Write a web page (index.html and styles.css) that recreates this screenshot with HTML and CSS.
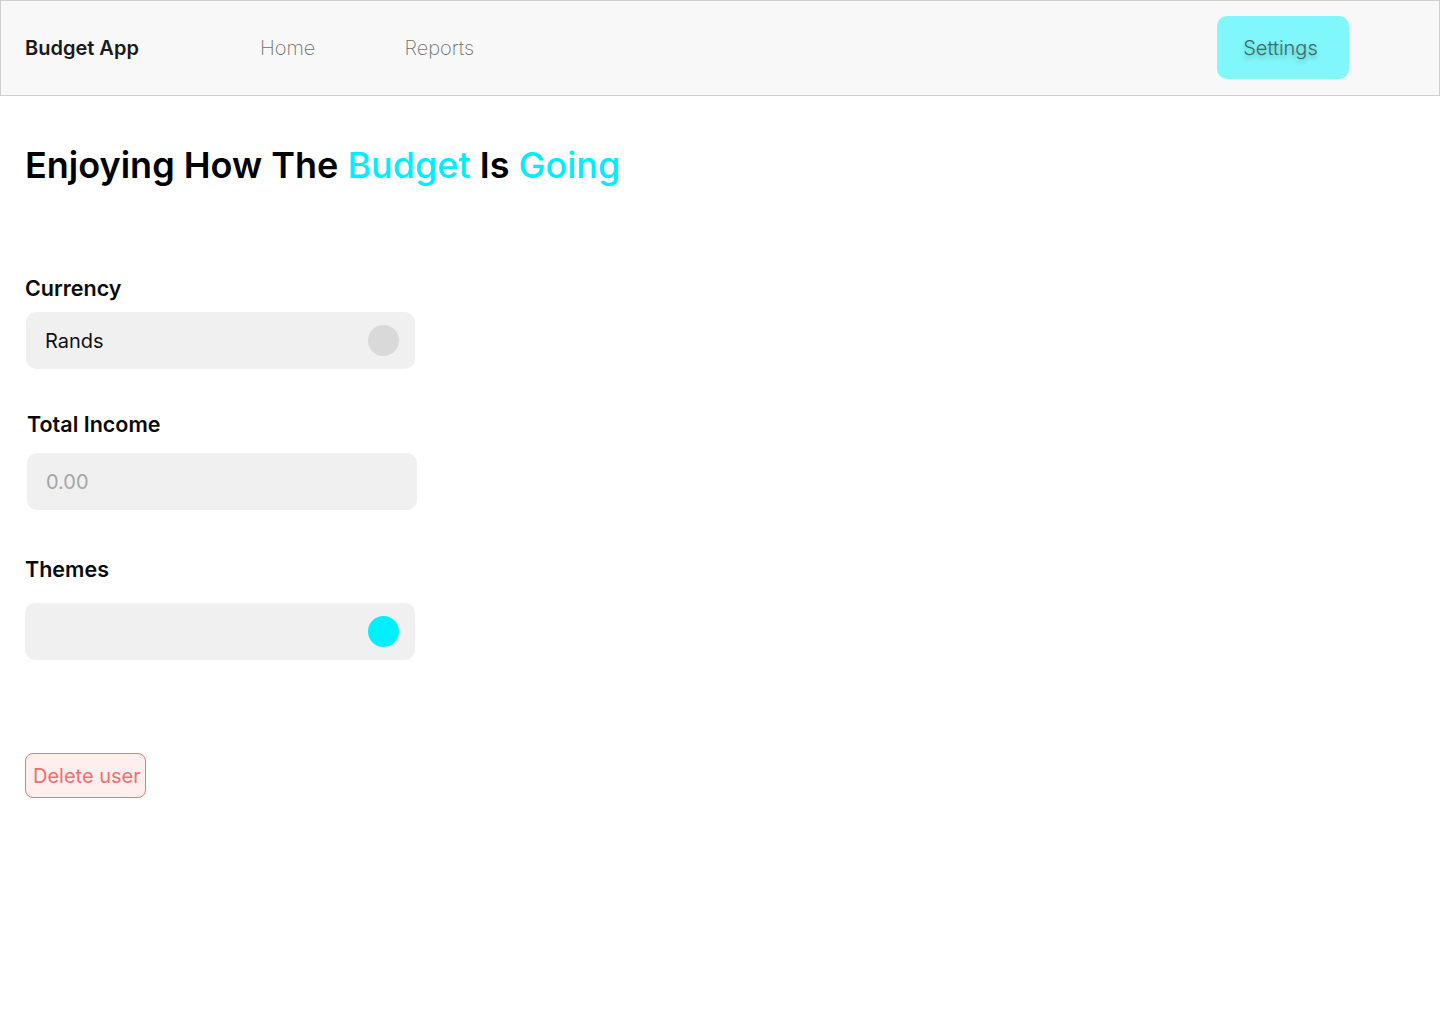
FILE: index.html
```html
<!DOCTYPE html>
<html>
<head>
<meta charset="utf-8">
<link rel="stylesheet" href="styles.css">
</head>
<body>
<header class="topbar">
  <div class="brand">Budget App</div>
  <nav class="nav">
    <a class="nav-link home">Home</a>
    <a class="nav-link reports">Reports</a>
  </nav>
  <button class="settings-btn">Settings</button>
</header>
<main class="content">
  <h1 class="title">Enjoying How The <span class="accent">Budget</span> Is <span class="accent">Going</span></h1>
  <section class="field currency">
    <label class="label">Currency</label>
    <div class="box"><span class="value">Rands</span><span class="dot grey"></span></div>
  </section>
  <section class="field income">
    <label class="label">Total Income</label>
    <div class="box"><span class="placeholder">0.00</span></div>
  </section>
  <section class="field themes">
    <label class="label">Themes</label>
    <div class="box"><span></span><span class="dot cyan"></span></div>
  </section>
  <button class="delete-btn">Delete user</button>
</main>
</body>
</html>
```

FILE: styles.css
```css
* { box-sizing: border-box; }
html, body { margin: 0; padding: 0; background: #fff; }
body { font-family: Inter, "Noto Sans", sans-serif; color: #111; }

.topbar {
  height: 96px;
  background: #f8f8f8;
  border: 1px solid #cfcfcf;
  display: flex;
  align-items: center;
  padding: 0 0 0 24px;
}
.brand { font-size: 20px; font-weight: 600; color: #1a1a1a; width: 235px; }
.nav { display: flex; gap: 89px; flex: 1; }
.nav-link { font-size: 20px; font-weight: 200; color: #6f6f6f; }
.settings-btn {
  margin-right: 90px;
  width: 132px;
  height: 63px;
  margin-bottom: 1px;
  border: none;
  border-radius: 10px;
  background: #80f7fa;
  font-family: Inter, sans-serif;
  font-size: 20px;
  font-weight: 300;
  color: #3a6a6c;
  text-shadow: 0 3px 4px rgba(0,0,0,0.25);
  padding: 0 5px 0 0;
}

.content { padding: 0 25px; }
.title {
  margin: 45px 0 0 0;
  font-family: Inter, sans-serif;
  font-size: 36px;
  font-weight: 600;
  line-height: 48px;
  color: #000;
}
.accent { color: #00eeff; font-weight: 500; }

.field { width: 390px; }
.label { display: block; font-size: 21.5px; font-weight: 600; color: #0a0a0a; line-height: 26px; }
.box {
  height: 57px;
  background: #f0f0f0;
  border-radius: 10px;
  display: flex;
  align-items: center;
  justify-content: space-between;
  padding: 0 16px 0 19px;
}
.value { font-size: 20px; color: #111; }
.placeholder { font-size: 20px; color: #a6a6a6; }
.dot { width: 31px; height: 31px; border-radius: 50%; }
.dot.grey { background: #d9d9d9; }
.dot.cyan { background: #00f0ff; }

.currency { margin-top: 86px; margin-left: 0; }
.currency .label { margin-bottom: 11px; }
.currency .box { margin-left: 1px; }

.income { margin-top: 42px; margin-left: 2px; }
.income .label { margin-bottom: 16px; }

.themes { margin-top: 46px; }
.themes .label { margin-bottom: 21px; }

.delete-btn {
  margin-top: 93px;
  width: 121px;
  height: 45px;
  border: 1px solid #f07575;
  border-radius: 8px;
  background: #ffeeee;
  color: #f07070;
  font-family: Inter, sans-serif;
  font-size: 20px;
  text-align: left;
  padding: 0 0 0 7px;
  white-space: nowrap;
}
```
